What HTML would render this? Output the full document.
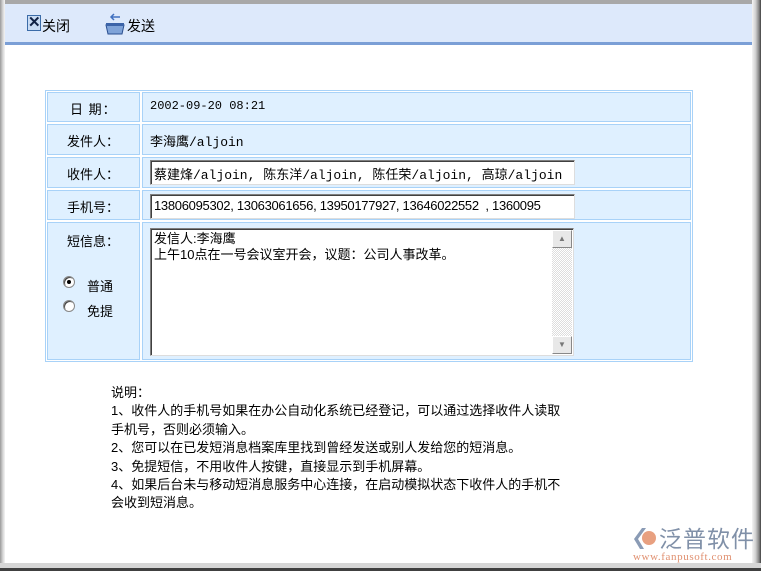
<!DOCTYPE html>
<html><head><meta charset="utf-8"><style>
*{margin:0;padding:0;box-sizing:border-box}
body{width:761px;height:571px;overflow:hidden;background:#fff;font-family:"Liberation Sans","Noto Sans CJK SC",sans-serif;font-size:13px;color:#000;position:relative}
.a{position:absolute}
.cell{position:absolute;background:#dff0ff;border:1px solid #a8d2f8}
.lab{text-align:center;line-height:1}
input,.box{position:absolute;background:#fff;border:1px solid #7f7f7f;border-right-color:#ddd;border-bottom-color:#ddd;box-shadow:inset 1px 1px 0 #404040;font-size:13px;white-space:nowrap;overflow:hidden;padding:3px 3px;font-family:"Liberation Mono","Noto Sans CJK SC",monospace}
</style></head><body>
<!-- frame -->
<div class="a" style="left:0;top:0;width:761px;height:4px;background:#a8a8a8"></div>
<div class="a" style="left:0;top:0;width:5px;height:571px;background:linear-gradient(90deg,#9a9a9a,#d8d8d8 60%,#f4f4f4)"></div>
<div class="a" style="left:752px;top:0;width:9px;height:571px;background:linear-gradient(90deg,#f4f4f4,#d0d0d0 40%,#808080 80%,#404040)"></div>
<div class="a" style="left:0;top:563px;width:761px;height:5px;background:#d6d6d6"></div>
<div class="a" style="left:0;top:568px;width:761px;height:3px;background:#404040"></div>
<!-- toolbar -->
<div class="a" style="left:5px;top:4px;width:747px;height:38px;background:#dde9fb"></div>
<div class="a" style="left:5px;top:42px;width:747px;height:3px;background:#7b9fd6"></div>
<div class="a" style="left:27px;top:15px;width:14px;height:16px;border:1px solid #3b6ca8;background:#c9dcf4;color:#124;font-weight:bold;font-size:15px;line-height:14px;text-align:center">✕</div>
<div class="a" style="left:42px;top:16px;font-size:14px">关闭</div>
<svg class="a" style="left:104px;top:11px" width="24" height="26"><path d="M16 6 L8 6 M10 3 L7 6 L10 9" stroke="#4070c0" fill="none" stroke-width="1.5"/><path d="M2 14 L20 14 L18 23 L4 23 Z" fill="#7fa3d8" stroke="#2a4f90"/><rect x="2" y="12" width="18" height="3" fill="#3b63a8"/></svg>
<div class="a" style="left:127px;top:16px;font-size:14px">发送</div>
<!-- table -->
<div class="a" style="left:45px;top:90px;width:648px;height:272px;border:1px solid #a8d2f8;background:#fff"></div>
<div class="cell" style="left:47px;top:92px;width:93px;height:30px"></div><div class="cell" style="left:142px;top:92px;width:549px;height:30px"></div>
<div class="cell" style="left:47px;top:124px;width:93px;height:31px"></div><div class="cell" style="left:142px;top:124px;width:549px;height:31px"></div>
<div class="cell" style="left:47px;top:157px;width:93px;height:31px"></div><div class="cell" style="left:142px;top:157px;width:549px;height:31px"></div>
<div class="cell" style="left:47px;top:190px;width:93px;height:30px"></div><div class="cell" style="left:142px;top:190px;width:549px;height:30px"></div>
<div class="cell" style="left:47px;top:222px;width:93px;height:138px"></div><div class="cell" style="left:142px;top:222px;width:549px;height:138px"></div>
<div class="a" style="left:70px;top:99px;letter-spacing:1px">日 期：</div>
<div class="a" style="left:67px;top:131px">发件人：</div>
<div class="a" style="left:67px;top:164px">收件人：</div>
<div class="a" style="left:67px;top:197px">手机号：</div>
<div class="a" style="left:67px;top:231px">短信息：</div>
<div class="a" style="left:150px;top:99px;font-family:'Liberation Mono',monospace;font-size:12px">2002-09-20 08:21</div>
<div class="a" style="left:150px;top:131px;font-family:'Liberation Mono','Noto Sans CJK SC',monospace">李海鹰/aljoin</div>
<div class="box" style="left:150px;top:160px;width:425px;height:25px">蔡建烽/aljoin, 陈东洋/aljoin, 陈任荣/aljoin, 高琼/aljoin</div>
<div class="box" style="left:150px;top:194px;width:425px;height:25px;font-family:'Liberation Sans',sans-serif;letter-spacing:-0.3px">13806095302, 13063061656, 13950177927, 13646022552&nbsp; , 1360095</div>
<div class="box" style="left:150px;top:228px;width:424px;height:128px;padding:2px 3px;line-height:16px;font-family:'Liberation Sans','Noto Sans CJK SC',sans-serif;white-space:normal">发信人:李海鹰<br>上午10点在一号会议室开会，议题：公司人事改革。</div>
<div class="a" style="left:552px;top:230px;width:20px;height:124px;background:repeating-conic-gradient(#ddd 0 25%,#fff 0 50%) 0 0/2px 2px"></div>
<div class="a" style="left:552px;top:230px;width:20px;height:18px;background:#e8e8e8;border:1px solid #888;border-top-color:#fff;border-left-color:#fff;font-size:8px;color:#777;text-align:center;line-height:16px">▲</div>
<div class="a" style="left:552px;top:336px;width:20px;height:18px;background:#e8e8e8;border:1px solid #888;border-top-color:#fff;border-left-color:#fff;font-size:8px;color:#777;text-align:center;line-height:16px">▼</div>
<div class="a" style="left:63px;top:276px;width:12px;height:12px;border-radius:50%;background:#fff;border:1px solid #888;box-shadow:inset 1px 1px 0 #444"></div>
<div class="a" style="left:67px;top:280px;width:4px;height:4px;border-radius:50%;background:#000"></div>
<div class="a" style="left:63px;top:300px;width:12px;height:12px;border-radius:50%;background:#fff;border:1px solid #888;box-shadow:inset 1px 1px 0 #444"></div>
<div class="a" style="left:87px;top:276px">普通</div>
<div class="a" style="left:87px;top:301px">免提</div>
<!-- notes -->
<div class="a" style="left:111px;top:384px;line-height:18.4px;width:520px">说明：<br>1、收件人的手机号如果在办公自动化系统已经登记，可以通过选择收件人读取<br>手机号，否则必须输入。<br>2、您可以在已发短消息档案库里找到曾经发送或别人发给您的短消息。<br>3、免提短信，不用收件人按键，直接显示到手机屏幕。<br>4、如果后台未与移动短消息服务中心连接，在启动模拟状态下收件人的手机不<br>会收到短消息。</div>
<!-- logo -->
<svg class="a" style="left:632px;top:527px" width="28" height="24"><path d="M10 1 L2 12 L8 22 L12 22 L6 12 L14 1Z" fill="#8a9bb5"/><circle cx="17" cy="11" r="7" fill="#e8a080"/></svg>
<div class="a" style="left:659px;top:522px;font-size:23px;color:#8090a8;letter-spacing:1px;font-family:'Noto Sans CJK SC',sans-serif;line-height:30px">泛普软件</div>
<div class="a" style="left:633px;top:551px;font-size:11px;color:#e09070;font-family:'Liberation Serif',serif;letter-spacing:0.6px">www.fanpusoft.com</div>
</body></html>
